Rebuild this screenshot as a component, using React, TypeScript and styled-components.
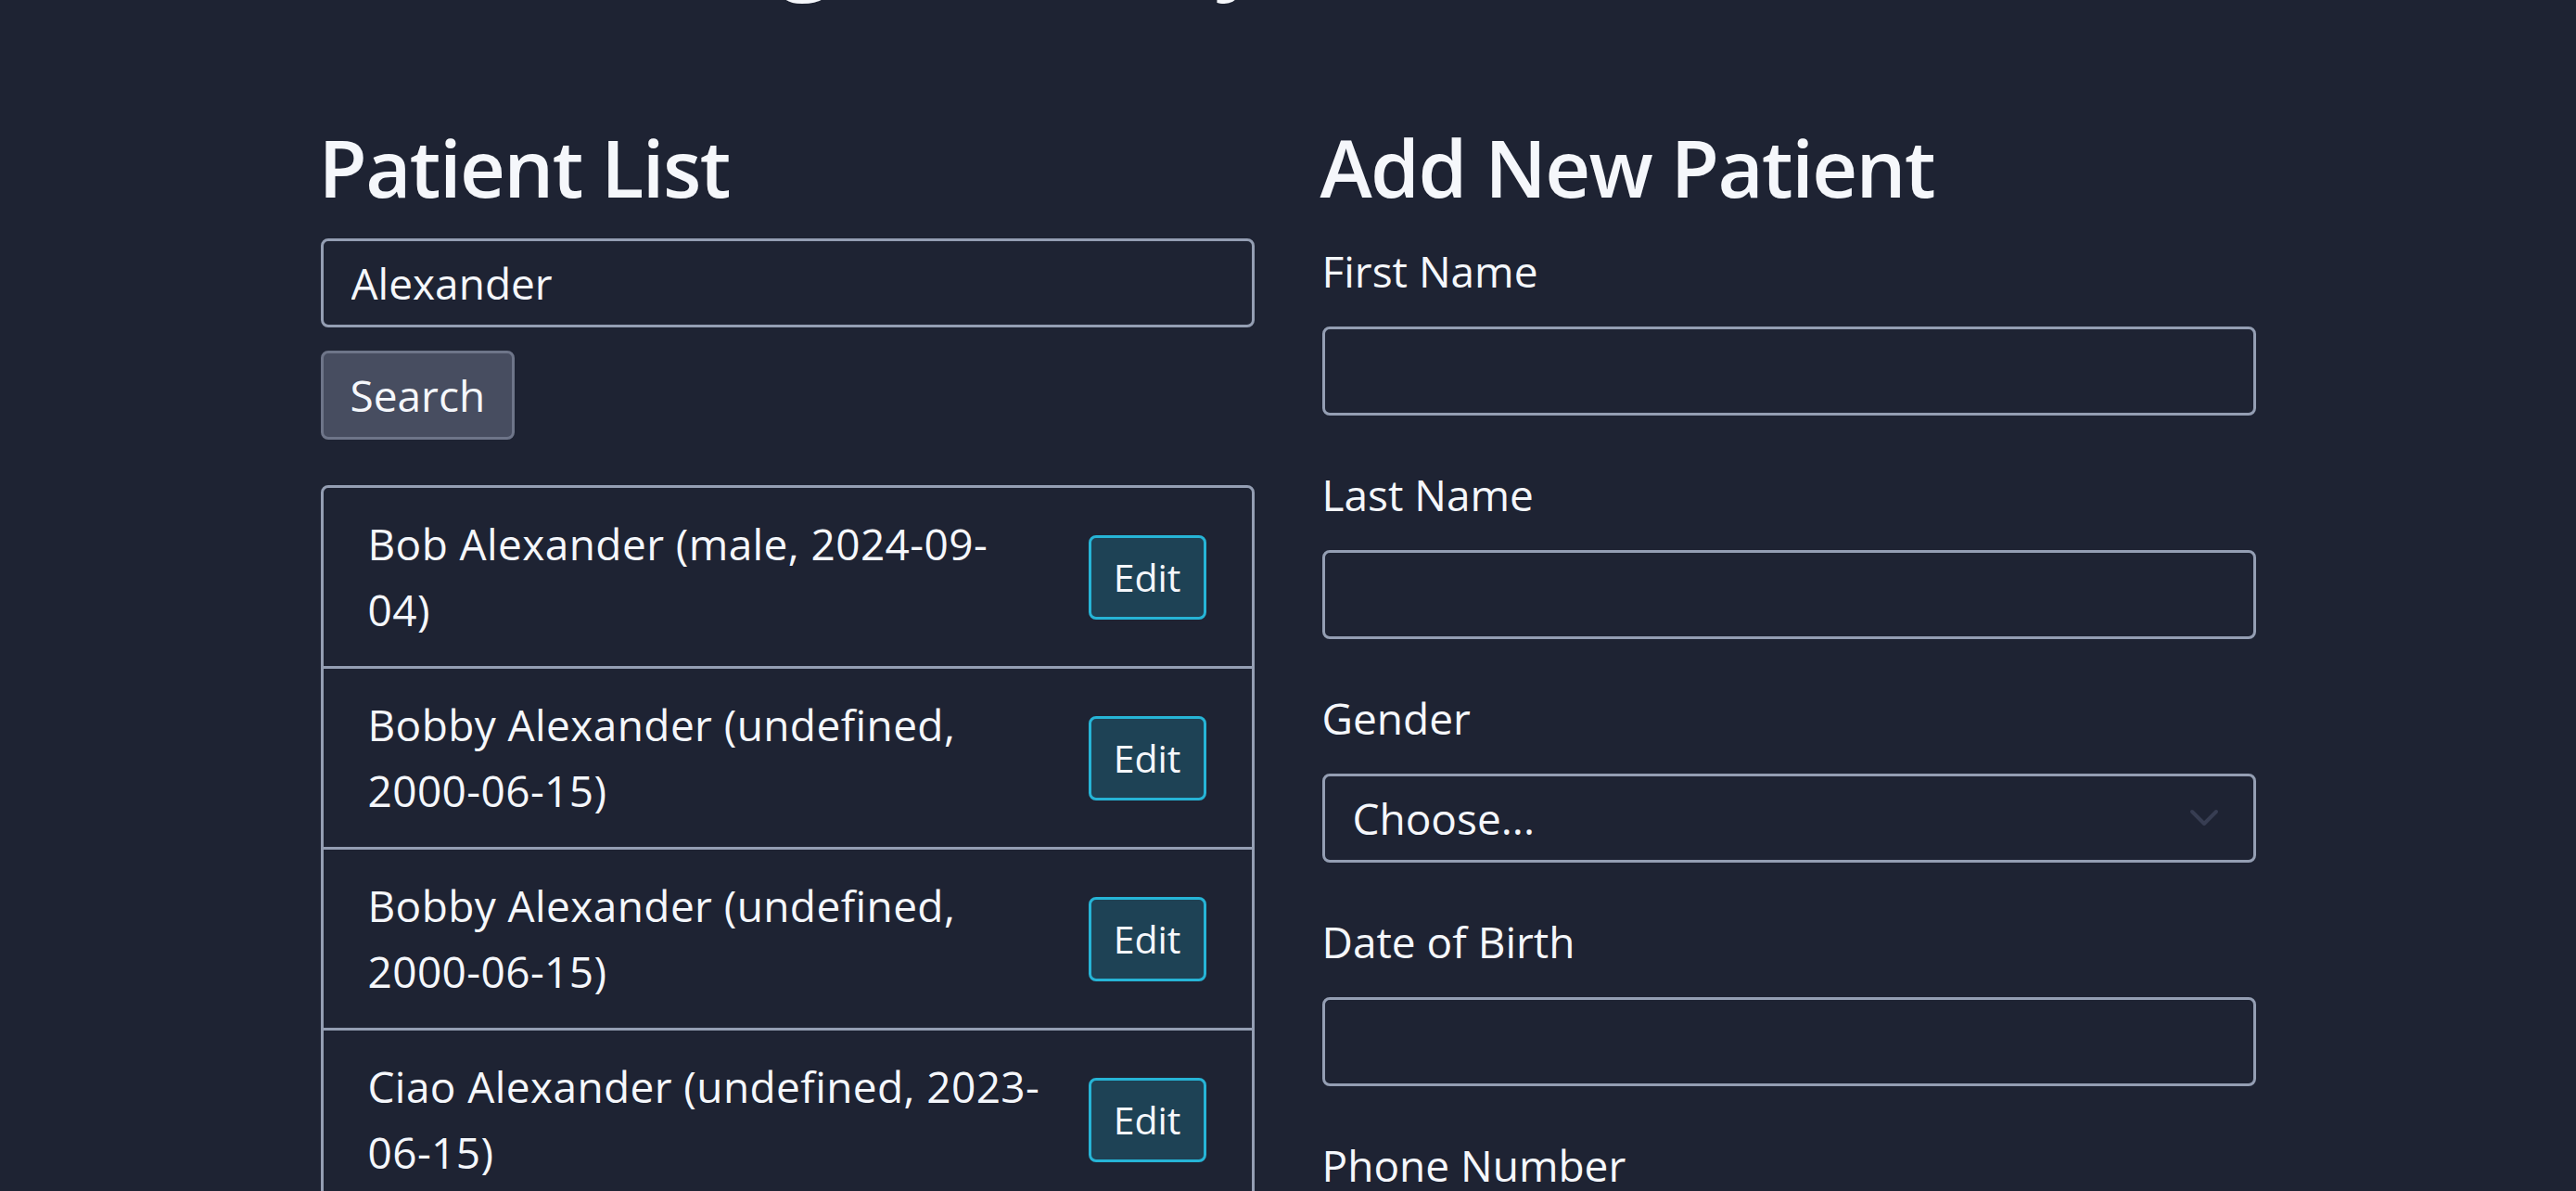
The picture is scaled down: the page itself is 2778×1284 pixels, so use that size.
import React from "react";
import styled, { createGlobalStyle } from "styled-components";

const GlobalStyle = createGlobalStyle`
  html, body {
    margin: 0;
    padding: 0;
    background: #1e2333;
    color: #f5f7fb;
    font-family: "Open Sans", "Noto Sans", sans-serif;
    overflow: hidden;
  }
  * { box-sizing: border-box; }
`;

const Page = styled.div`
  width: 2778px;
  height: 1284px;
  overflow: hidden;
`;

const TitleBar = styled.header`
  padding-left: 172px;
  margin-top: -129px;
`;

const AppTitle = styled.h1`
  margin: 0;
  font-size: 108px;
  line-height: 132px;
  font-weight: 500;
  white-space: nowrap;
`;

const Container = styled.main`
  width: 2087px;
  margin: 126px auto 0;
  display: grid;
  grid-template-columns: 1fr 1fr;
  column-gap: 73px;
  align-items: start;
`;

const Column = styled.section`
  display: flex;
  flex-direction: column;
`;

const SectionTitle = styled.h2`
  margin: 0 0 25px;
  font-size: 85px;
  line-height: 103px;
  font-weight: 600;
  letter-spacing: -1.6px;
  text-indent: -2px;
`;

const TextInput = styled.input`
  display: block;
  width: 100%;
  height: 96px;
  padding: 0 30px;
  border: 3px solid #949eb3;
  border-radius: 8px;
  background: transparent;
  color: #f5f7fb;
  font-family: inherit;
  font-size: 46px;
  outline: none;
`;

const SearchButton = styled.button`
  align-self: flex-start;
  margin-top: 25px;
  height: 96px;
  padding: 0 29px;
  border: 3px solid #6e7589;
  border-radius: 8px;
  background: #474d60;
  color: #f5f7fb;
  font-family: inherit;
  font-size: 46px;
`;

const PatientList = styled.ul`
  list-style: none;
  margin: 49px 0 0;
  padding: 0;
  border: 3px solid #949eb3;
  border-radius: 8px;
`;

const PatientRow = styled.li<{ $first?: boolean }>`
  display: flex;
  align-items: center;
  justify-content: space-between;
  gap: 24px;
  padding: 25px 49px 25px 48px;
  border-top: ${(p) => (p.$first ? "none" : "3px solid #949eb3")};
`;

const PatientName = styled.span`
  font-size: 46px;
  line-height: 71px;
  letter-spacing: 0.4px;
`;

const NameLine = styled.span`
  display: block;
  white-space: nowrap;
`;

const EditButton = styled.button`
  flex: none;
  height: 91px;
  padding: 0 24px;
  border: 3px solid #26b4d6;
  border-radius: 8px;
  background: #1e4255;
  color: #f5f7fb;
  font-family: inherit;
  font-size: 41px;
`;

const Field = styled.div`
  display: flex;
  flex-direction: column;
  margin-bottom: 50px;
`;

const Label = styled.label`
  font-size: 46px;
  line-height: 71px;
  margin-bottom: 24px;
`;

const SelectWrap = styled.div`
  position: relative;
`;

const Select = styled.select`
  display: block;
  width: 100%;
  height: 96px;
  padding: 0 30px;
  border: 3px solid #949eb3;
  border-radius: 8px;
  background: transparent;
  color: #f5f7fb;
  font-family: inherit;
  font-size: 46px;
  appearance: none;
  outline: none;
`;

const Chevron = styled.svg`
  position: absolute;
  right: 40px;
  top: 50%;
  transform: translateY(-50%);
  width: 32px;
  height: 20px;
  pointer-events: none;
`;

const patients = [
  { id: 1, lines: ["Bob Alexander (male, 2024-09-", "04)"] },
  { id: 2, lines: ["Bobby Alexander (undefined,", "2000-06-15)"] },
  { id: 3, lines: ["Bobby Alexander (undefined,", "2000-06-15)"] },
  { id: 4, lines: ["Ciao Alexander (undefined, 2023-", "06-15)"] },
];

export default function App() {
  return (
    <Page>
      <GlobalStyle />
      <TitleBar>
        <AppTitle>Patient Management System</AppTitle>
      </TitleBar>
      <Container>
        <Column>
          <SectionTitle>Patient List</SectionTitle>
          <TextInput type="text" defaultValue="Alexander" />
          <SearchButton type="button">Search</SearchButton>
          <PatientList>
            {patients.map((p, i) => (
              <PatientRow key={p.id} $first={i === 0}>
                <PatientName>
                  {p.lines.map((l, j) => (
                    <NameLine key={j}>{l}</NameLine>
                  ))}
                </PatientName>
                <EditButton type="button">Edit</EditButton>
              </PatientRow>
            ))}
          </PatientList>
        </Column>
        <Column>
          <SectionTitle>Add New Patient</SectionTitle>
          <Field>
            <Label>First Name</Label>
            <TextInput type="text" />
          </Field>
          <Field>
            <Label>Last Name</Label>
            <TextInput type="text" />
          </Field>
          <Field>
            <Label>Gender</Label>
            <SelectWrap>
              <Select defaultValue="">
                <option value="">Choose...</option>
                <option value="male">Male</option>
                <option value="female">Female</option>
              </Select>
              <Chevron viewBox="0 0 32 20" fill="none">
                <path
                  d="M3 3 L16 16 L29 3"
                  stroke="#373d52"
                  strokeWidth="4"
                  strokeLinecap="round"
                  strokeLinejoin="round"
                />
              </Chevron>
            </SelectWrap>
          </Field>
          <Field>
            <Label>Date of Birth</Label>
            <TextInput type="text" />
          </Field>
          <Field>
            <Label>Phone Number</Label>
            <TextInput type="text" />
          </Field>
        </Column>
      </Container>
    </Page>
  );
}
